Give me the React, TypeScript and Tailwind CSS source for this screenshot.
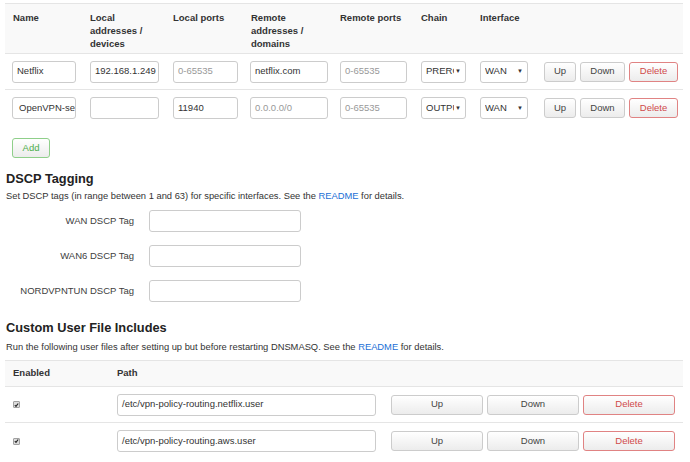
import React from 'react'

const font = { fontFamily: '"Liberation Sans", Arial, sans-serif' }

function TextInput({ w, value, placeholder, pl = 'pl-[4px]' }: { w: string; value?: string; placeholder?: string; pl?: string }) {
  return (
    <div
      className={`${w} h-[22px] border border-[#cccccc] rounded-[3px] bg-white flex items-center ${pl} pr-[4px] overflow-hidden whitespace-nowrap text-[9.5px]`}
    >
      {value ? (
        <span className="text-[#333333]">{value}</span>
      ) : (
        <span className="text-[#999999]">{placeholder}</span>
      )}
    </div>
  )
}

function Select({ w, value, clip }: { w: string; value: string; clip: string }) {
  return (
    <div
      className={`${w} h-[22px] border border-[#cccccc] rounded-[3px] bg-white flex items-center justify-between pl-[4px] pr-[4px] text-[9.5px] text-[#333333]`}
    >
      <span className={`${clip} overflow-hidden whitespace-nowrap`}>{value}</span>
      <span className="text-[6px] text-[#333333]">▼</span>
    </div>
  )
}

function Btn({ w, label, kind = 'default' }: { w: string; label: string; kind?: 'default' | 'danger' | 'add' }) {
  const tone =
    kind === 'danger'
      ? 'border-[#e08383] text-[#d0494a]'
      : kind === 'add'
        ? 'border-[#8fcf8a] text-[#4cae4c]'
        : 'border-[#cccccc] text-[#444444]'
  return (
    <div
      className={`${w} h-[20px] border ${tone} rounded-[3px] bg-gradient-to-b from-white to-[#ececec] flex items-center justify-center text-[9.5px]`}
    >
      {label}
    </div>
  )
}

const rules = [
  { name: 'Netflix', local: '192.168.1.249', lports: '', remote: 'netflix.com', rPh: '', chain: 'PREROUTING', iface: 'WAN', pl: 'pl-[4px]' },
  { name: 'OpenVPN-server', local: '', lports: '11940', remote: '', rPh: '0.0.0.0/0', chain: 'OUTPUT', iface: 'WAN', pl: 'pl-[6px]' },
]

const cols = 'grid grid-cols-[78px_83px_77px_90px_81px_59px_64px_146px]'

function Checkbox() {
  return (
    <div className="w-[7px] h-[7px] bg-[#dcdcdc] border border-[#a0a0a0] rounded-[1px] flex items-center justify-center">
      <svg width="6" height="6" viewBox="0 0 6 6">
        <path d="M1 3.2 L2.4 4.6 L5 1.2" stroke="#222" strokeWidth="1.4" fill="none" />
      </svg>
    </div>
  )
}

export default function App() {
  return (
    <div className="w-[690px] h-[462px] bg-white text-[#333333] overflow-hidden" style={font}>
      {/* Rules table */}
      <div className="ml-[5px] mt-[3px] w-[678px]">
        <div className={`${cols} bg-[#f9f9f9] border-t border-b border-[#e5e5e5] h-[51px] text-[9.5px] font-bold leading-[13px] text-[#333333]`}>
          <div className="pl-[8px] pt-[7px]">Name</div>
          <div className="pl-[7px] pt-[7px]">Local<br />addresses /<br />devices</div>
          <div className="pl-[7px] pt-[7px]">Local ports</div>
          <div className="pl-[8px] pt-[7px]">Remote<br />addresses /<br />domains</div>
          <div className="pl-[7px] pt-[7px]">Remote ports</div>
          <div className="pl-[7px] pt-[7px]">Chain</div>
          <div className="pl-[7px] pt-[7px]">Interface</div>
          <div />
        </div>
        {rules.map((r, i) => (
          <div key={r.name} className={`${cols} h-[36px] items-center ${i === 0 ? 'border-b border-[#e5e5e5]' : ''}`}>
            <div className="pl-[7px]"><TextInput w="w-[64px]" value={r.name} pl={r.pl} /></div>
            <div className="pl-[7px]"><TextInput w="w-[69px]" value={r.local} /></div>
            <div className="pl-[7px]"><TextInput w="w-[65px]" value={r.lports} placeholder="0-65535" /></div>
            <div className="pl-[7px]"><TextInput w="w-[78px]" value={r.remote} placeholder={r.rPh} /></div>
            <div className="pl-[7px]"><TextInput w="w-[67px]" placeholder="0-65535" /></div>
            <div className="pl-[7px]"><Select w="w-[45px]" value={r.chain} clip="w-[28px]" /></div>
            <div className="pl-[7px]"><Select w="w-[48px]" value={r.iface} clip="w-[27px]" /></div>
            <div className="pl-[7px] flex gap-[4px]">
              <Btn w="w-[32px]" label="Up" />
              <Btn w="w-[45px]" label="Down" />
              <Btn w="w-[49px]" label="Delete" kind="danger" />
            </div>
          </div>
        ))}
      </div>

      <div className="ml-[12px] mt-[12px]">
        <Btn w="w-[38px]" label="Add" kind="add" />
      </div>

      {/* DSCP */}
      <div className="px-[6px]">
        <h3 className="text-[12.8px] font-bold mt-[13px] leading-[16px] text-[#222222]">DSCP Tagging</h3>
        <p className="text-[9.35px] mt-[3px] leading-[13px]">
          Set DSCP tags (in range between 1 and 63) for specific interfaces. See the{' '}
          <span className="text-[#1a6fd6]">README</span> for details.
        </p>
        <div className="mt-[7px] flex flex-col gap-[13px]">
          {['WAN DSCP Tag', 'WAN6 DSCP Tag', 'NORDVPNTUN DSCP Tag'].map(l => (
            <div key={l} className="flex items-center">
              <div className="w-[128px] text-right text-[9.5px] text-[#404040]">{l}</div>
              <div className="ml-[15px]">
                <TextInput w="w-[152px]" />
              </div>
            </div>
          ))}
        </div>

        <h3 className="text-[12.8px] font-bold mt-[18px] leading-[16px] text-[#222222]">Custom User File Includes</h3>
        <p className="text-[9.35px] mt-[5px] leading-[13px]">
          Run the following user files after setting up but before restarting DNSMASQ. See the{' '}
          <span className="text-[#1a6fd6]">README</span> for details.
        </p>
      </div>

      {/* Includes table */}
      <div className="ml-[5px] mt-[6px] w-[678px]">
        <div className="grid grid-cols-[105px_273px_300px] bg-[#f9f9f9] border-t border-b border-[#e5e5e5] h-[27px] items-center text-[9.5px] font-bold">
          <div className="pl-[8px]">Enabled</div>
          <div className="pl-[7px]">Path</div>
          <div />
        </div>
        {['/etc/vpn-policy-routing.netflix.user', '/etc/vpn-policy-routing.aws.user'].map((p, i) => (
          <div key={p} className={`grid grid-cols-[105px_273px_300px] h-[36px] items-center ${i === 0 ? 'border-b border-[#e5e5e5]' : ''}`}>
            <div className="pl-[8px]"><Checkbox /></div>
            <div className="pl-[7px]"><TextInput w="w-[259px]" value={p} /></div>
            <div className="pl-[8px] flex gap-[4px]">
              <Btn w="w-[92px]" label="Up" />
              <Btn w="w-[92px]" label="Down" />
              <Btn w="w-[92px]" label="Delete" kind="danger" />
            </div>
          </div>
        ))}
      </div>
    </div>
  )
}
